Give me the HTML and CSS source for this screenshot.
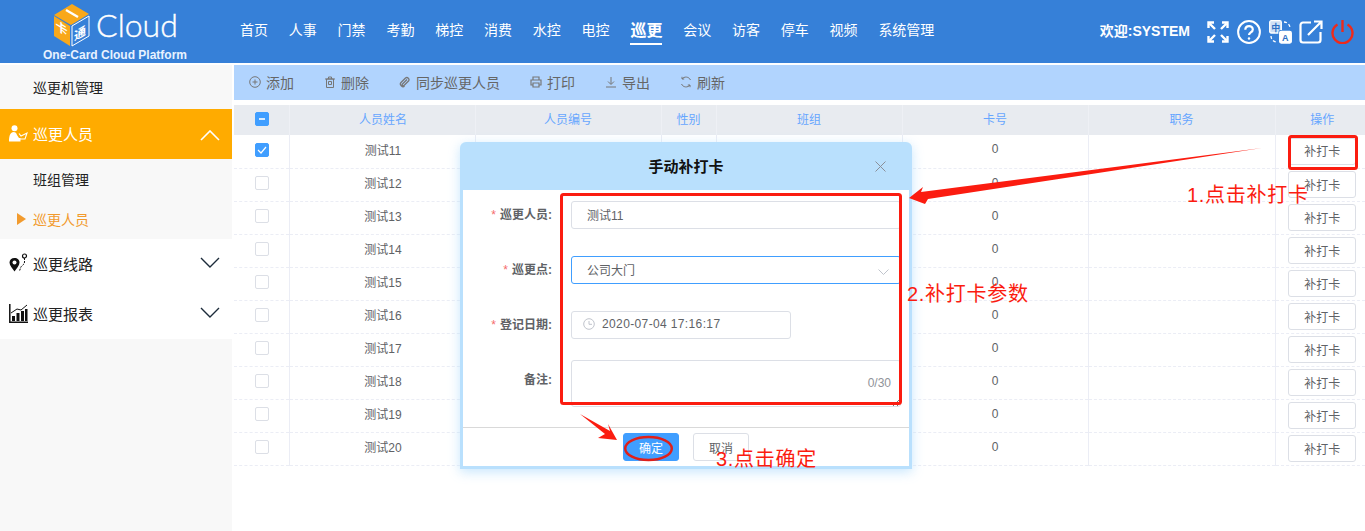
FILE: index.html
```html
<!DOCTYPE html>
<html lang="zh-CN">
<head>
    <meta charset="UTF-8">
    <title>One-Card Cloud Platform</title>
    <link rel="stylesheet" href="styles.css">
</head>
<body>
    <!-- Header -->
    <header class="topbar">
        <div class="brand">
            <div class="brand-row">
                <svg class="brand-cube" width="37" height="46" viewBox="0 0 37 46">
                    <polygon points="19,2 36,12 18,23 1,13" fill="#f9a81a"/>
                    <polygon points="1,14 17,24 17,44 1,34" fill="#f9a81a"/>
                    <polygon points="19,24 36,14 36,34 19,44" fill="none" stroke="#fff" stroke-width="1"/>
                    <path d="M13 8l12 7" stroke="#fff" stroke-width="2.400"/>
                    <text class="cube-text" transform="matrix(1 .6 0 1 2.500 27)">卡</text>
                    <text class="cube-text" transform="matrix(1 -.58 0 1 21 39)">通</text>
                </svg>
                <span class="brand-name">Cloud</span>
            </div>
            <div class="brand-sub">One-Card Cloud Platform</div>
        </div>
        <nav class="mainnav">
            <a>首页</a><a>人事</a><a>门禁</a><a>考勤</a><a>梯控</a><a>消费</a><a>水控</a><a>电控</a>
            <a class="active">巡更</a>
            <a>会议</a><a>访客</a><a>停车</a><a>视频</a><a>系统管理</a>
        </nav>
        <div class="welcome">欢迎:SYSTEM</div>
        <div class="tools">
            <svg width="22" height="22" viewBox="0 0 22 22" fill="none" stroke="#fff" stroke-width="2.400">
                <path d="M1.500 7V1.500H7M15 1.500h5.500V7M20.500 15v5.500H15M7 20.500H1.500V15"/>
                <path d="M2.500 2.500l5.500 5.500M19.500 2.500L14 8M19.500 19.500L14 14M2.500 19.500L8 14"/>
            </svg>
            <svg width="24" height="24" viewBox="0 0 24 24" fill="none" stroke="#fff" stroke-width="2">
                <circle cx="12" cy="12" r="10.900"/>
                <path d="M8.300 9.700c0-4.800 7.500-4.800 7.500-.3 0 3-3.800 3-3.800 5.600" stroke-width="2.200"/>
                <circle cx="12" cy="18.500" r="1.200" fill="#fff" stroke="none"/>
            </svg>
            <svg width="23" height="24" viewBox="0 0 23 24" fill="none" stroke="#fff" stroke-width="1.300">
                <rect x=".7" y=".7" width="11.600" height="12.300" rx="1.500" fill="#cfe0f5"/>
                <rect x="10" y="10.700" width="12.300" height="12.300" rx="1.500" fill="#fff" stroke="#3680d8"/>
                <rect x="10.700" y="11.400" width="11.600" height="11.600" rx="1.500" fill="#fff"/>
                <text x="2.200" y="10.500" class="tool-text">中</text>
                <text x="13" y="21" class="tool-text">A</text>
                <path d="M15 2a6 6 0 0 1 6 6M2 16a6 6 0 0 0 5 6" stroke-dasharray="3 2"/>
            </svg>
            <svg width="24" height="24" viewBox="0 0 24 24" fill="none" stroke="#fff" stroke-width="2.200">
                <path d="M12 2.500H4A2.500 2.500 0 0 0 1.500 5v15A2.500 2.500 0 0 0 4 22.500h15a2.500 2.500 0 0 0 2.500-2.500v-8"/>
                <path d="M9 15L22 2M15 1.500h7.500V9"/>
            </svg>
            <svg width="23" height="25" viewBox="0 0 23 25" fill="none" stroke="#ee2a1b" stroke-width="2.400">
                <path d="M6.500 5.500a10 10 0 1 0 10 0"/>
                <path d="M11.500 1v12"/>
            </svg>
        </div>
    </header>

    <div class="layout">
        <!-- Sidebar -->
        <aside class="sidebar">
            <div class="side-item">巡更机管理</div>
            <div class="side-group side-group-open">
                <svg class="side-icon" width="19" height="17" viewBox="0 0 19 17">
                    <circle cx="5.500" cy="3.200" r="3" fill="#fff"/>
                    <path d="M0 16.500c0-6 1.500-9.500 4.500-9.500 2 0 3 1 3.500 3l2 3h1.500v3.500z" fill="#fff"/>
                    <path d="M10 8.500l2 2.500 6-3-2 6h-5" fill="none" stroke="#fff" stroke-width="1.100"/>
                </svg>
                <span class="side-label">巡更人员</span>
                <svg class="side-arrow side-arrow-up" width="20" height="11" viewBox="0 0 20 11" fill="none" stroke="#fff" stroke-width="1.600"><path d="M1 10l9-9 9 9"/></svg>
            </div>
            <div class="side-sub">
                <div class="sub-item">班组管理</div>
                <div class="sub-item sub-item-active"><i class="sub-mark"></i>巡更人员</div>
            </div>
            <div class="side-group">
                <svg class="side-icon" width="19" height="20" viewBox="0 0 19 20">
                    <path d="M5.500 5C2.500 5 .5 7 .5 9.500c0 3 3 6 5 9 2-3 5-6 5-9C10.500 7 8.500 5 5.500 5z" fill="#111"/>
                    <circle cx="5.500" cy="9.500" r="2" fill="#fff"/>
                    <circle cx="15.500" cy="3" r="2" fill="none" stroke="#111" stroke-width="1.200"/>
                    <path d="M15.500 5v4c0 3-3 3-4 6l-1 3" fill="none" stroke="#111" stroke-dasharray="2 1"/>
                </svg>
                <span class="side-label">巡更线路</span>
                <svg class="side-arrow side-arrow-down" width="20" height="11" viewBox="0 0 20 11" fill="none" stroke="#1c2b3a" stroke-width="1.400"><path d="M1 1l9 9 9-9"/></svg>
            </div>
            <div class="side-group">
                <svg class="side-icon" width="19" height="19" viewBox="0 0 19 19">
                    <path d="M.8 0v18.200H19" fill="none" stroke="#111" stroke-width="1.500"/>
                    <path d="M3 17v-5h3v5zM7.500 17v-8h3v8zM12 17v-10h3v10zM16 17V5h2.500v12z" fill="#111"/>
                    <path d="M2 9l6-4 4 1 6-5" fill="none" stroke="#111"/>
                </svg>
                <span class="side-label">巡更报表</span>
                <svg class="side-arrow side-arrow-down" width="20" height="11" viewBox="0 0 20 11" fill="none" stroke="#1c2b3a" stroke-width="1.400"><path d="M1 1l9 9 9-9"/></svg>
            </div>
        </aside>

        <!-- Main Content -->
        <main class="content">
            <div class="toolbar">
                <span class="tool-btn">
                    <svg width="12" height="12" viewBox="0 0 12 12" fill="none" stroke="#777"><circle cx="6" cy="6" r="5.300"/><path d="M3.500 6h5M6 3.500v5"/></svg>添加
                </span>
                <span class="tool-btn">
                    <svg width="12" height="12" viewBox="0 0 12 12" fill="none" stroke="#777"><path d="M2.500 3h7v8.500h-7zM1 3h10M4.500 3V1h3v2M4.500 5.500h3v3h-3z"/></svg>删除
                </span>
                <span class="tool-btn">
                    <svg width="12" height="12" viewBox="0 0 12 12" fill="none" stroke="#777" stroke-width="1.300"><path d="M2 6.500L6.500 2c2-1.500 4.500 1 3 3L5 9.500c-1 1-2.500-.5-1.500-1.500L8 3.500M2 6.500c-2 2 1.500 5.500 3.500 3.500"/></svg>同步巡更人员
                </span>
                <span class="tool-btn">
                    <svg width="12" height="12" viewBox="0 0 12 12" fill="none" stroke="#777" stroke-width="1.200"><path d="M3 4V1h6v3M3 9H1V4h10v5H9M3 7h6v4H3z"/></svg>打印
                </span>
                <span class="tool-btn">
                    <svg width="12" height="12" viewBox="0 0 12 12" fill="none" stroke="#777"><path d="M6 1v7M3 5.500L6 8.500 9 5.500M1 11h10"/></svg>导出
                </span>
                <span class="tool-btn">
                    <svg width="12" height="12" viewBox="0 0 12 12" fill="none" stroke="#777"><path d="M10.500 4A5 5 0 0 0 2 3M1.500 8A5 5 0 0 0 10 9M2 .8V3h2.200M10 11.200V9H7.800"/></svg>刷新
                </span>
            </div>
            <table class="grid">
                <colgroup>
                    <col class="col-check"><col class="col-name"><col class="col-no"><col class="col-sex">
                    <col class="col-team"><col class="col-card"><col class="col-job"><col class="col-op">
                </colgroup>
                <thead>
                    <tr>
                        <th><span class="check check-on"><i class="check-dash"></i></span></th>
                        <th>人员姓名</th><th>人员编号</th><th>性别</th><th>班组</th><th>卡号</th><th>职务</th><th>操作</th>
                    </tr>
                </thead>
                <tbody>
                    <tr><td><span class="check check-on"><svg width="10" height="8" viewBox="0 0 10 8" fill="none" stroke="#fff" stroke-width="1.200"><path d="M1 4l3 3 5-6"/></svg></span></td><td>测试11</td><td></td><td></td><td></td><td>0</td><td></td><td><button class="mini-btn">补打卡</button></td></tr>
                    <tr><td><span class="check"></span></td><td>测试12</td><td></td><td></td><td></td><td>0</td><td></td><td><button class="mini-btn">补打卡</button></td></tr>
                    <tr><td><span class="check"></span></td><td>测试13</td><td></td><td></td><td></td><td>0</td><td></td><td><button class="mini-btn">补打卡</button></td></tr>
                    <tr><td><span class="check"></span></td><td>测试14</td><td></td><td></td><td></td><td>0</td><td></td><td><button class="mini-btn">补打卡</button></td></tr>
                    <tr><td><span class="check"></span></td><td>测试15</td><td></td><td></td><td></td><td>0</td><td></td><td><button class="mini-btn">补打卡</button></td></tr>
                    <tr><td><span class="check"></span></td><td>测试16</td><td></td><td></td><td></td><td>0</td><td></td><td><button class="mini-btn">补打卡</button></td></tr>
                    <tr><td><span class="check"></span></td><td>测试17</td><td></td><td></td><td></td><td>0</td><td></td><td><button class="mini-btn">补打卡</button></td></tr>
                    <tr><td><span class="check"></span></td><td>测试18</td><td></td><td></td><td></td><td>0</td><td></td><td><button class="mini-btn">补打卡</button></td></tr>
                    <tr><td><span class="check"></span></td><td>测试19</td><td></td><td></td><td></td><td>0</td><td></td><td><button class="mini-btn">补打卡</button></td></tr>
                    <tr><td><span class="check"></span></td><td>测试20</td><td></td><td></td><td></td><td>0</td><td></td><td><button class="mini-btn">补打卡</button></td></tr>
                </tbody>
            </table>
        </main>
    </div>

    <!-- Dialog -->
    <div class="dialog">
        <div class="dialog-head">
            <span class="dialog-title">手动补打卡</span>
            <svg class="dialog-close" width="11" height="11" viewBox="0 0 11 11" stroke="#8a8f99"><path d="M.5.500l10 10M10.500.500l-10 10"/></svg>
        </div>
        <div class="dialog-body">
            <div class="form-row">
                <label class="form-label"><em>*</em>巡更人员:</label>
                <div class="field field-wide">测试11</div>
            </div>
            <div class="form-row">
                <label class="form-label"><em>*</em>巡更点:</label>
                <div class="field field-wide field-focus">公司大门
                    <svg class="field-arrow" width="11" height="6" viewBox="0 0 11 6" fill="none" stroke="#c0c4cc"><path d="M.5.500l5 5 5-5"/></svg>
                </div>
            </div>
            <div class="form-row">
                <label class="form-label"><em>*</em>登记日期:</label>
                <div class="field field-date">
                    <svg width="12" height="12" viewBox="0 0 12 12" fill="none" stroke="#c0c4cc"><circle cx="6" cy="6" r="5.300"/><path d="M6 3v3.300h3"/></svg>
                    <span class="date-text">2020-07-04 17:16:17</span>
                </div>
            </div>
            <div class="form-row form-row-note">
                <label class="form-label form-label-note">备注:</label>
                <div class="field-area">
                    <span class="area-count">0/30</span>
                    <svg class="area-grip" width="7" height="7" viewBox="0 0 7 7" stroke="#777"><path d="M0 7l7-7M4 7l3-3"/></svg>
                </div>
            </div>
        </div>
        <div class="dialog-foot">
            <button class="dlg-btn dlg-btn-primary">确定</button>
            <button class="dlg-btn">取消</button>
        </div>
    </div>

    <!-- Tutorial marks drawn over the screenshot -->
    <svg class="marks" width="1365" height="531" viewBox="0 0 1365 531">
        <polygon points="909,198 923,187 921,192 1262,148 928,199 925,204" fill="#fb1c10"/>
        <polygon points="580,414 610,431 608,424 617,440 598,438 605,434" fill="#fb1c10"/>
        <rect x="1289.500" y="136.500" width="67" height="32" rx="2" fill="none" stroke="#fb1c10" stroke-width="3"/>
        <rect x="561.500" y="194.500" width="339" height="209" rx="2" fill="none" stroke="#fb1c10" stroke-width="3"/>
        <ellipse cx="648.500" cy="448.500" rx="23.300" ry="11.500" fill="none" stroke="#e0201a" stroke-width="2.500"/>
    </svg>
    <div class="note note-one">1.点击补打卡</div>
    <div class="note note-two">2.补打卡参数</div>
    <div class="note note-three">3.点击确定</div>
</body>
</html>
```

FILE: styles.css
```css
/* General */
* {
    box-sizing: border-box;
}

html, body {
    height: 100%;
}

body {
    margin: 0;
    display: flex;
    flex-direction: column;
    overflow: hidden;
    background-color: #fff;
    color: #606266;
    font-family: "Liberation Sans", "Noto Sans CJK SC", sans-serif;
    font-size: 12px;
}

/* Header */
.topbar {
    height: 63px;
    flex: none;
    display: flex;
    align-items: center;
    background-color: #3680d8;
    color: #fff;
}

.brand {
    width: 240px;
    flex: none;
    padding-left: 43px;
}

.brand-row {
    height: 46px;
    margin-top: 1px;
    display: flex;
    align-items: center;
    padding-left: 10px;
}

.brand-cube {
    flex: none;
}

.cube-text {
    font-size: 12px;
    font-weight: 700;
    fill: #fff;
}

.brand-name {
    margin-left: 6px;
    font-family: Lato, sans-serif;
    font-size: 32px;
    font-weight: 300;
    line-height: 40px;
    -webkit-text-stroke: 0.4px #fff;
}

.brand-sub {
    width: 144px;
    font-size: 12px;
    font-weight: 700;
    line-height: 14px;
    color: #e8f2ff;
    white-space: nowrap;
}

.mainnav {
    display: flex;
    align-items: center;
    gap: 20.8px;
    font-size: 14px;
    margin-top: -6px;
}

.mainnav .active {
    font-size: 16px;
    font-weight: 700;
    margin-top: 4px;
    padding-bottom: 2px;
    border-bottom: 2px solid #fff;
}

.welcome {
    margin-left: auto;
    margin-top: -3px;
    font-size: 14px;
    font-weight: 700;
}

.tools {
    display: flex;
    align-items: center;
    gap: 7.75px;
    margin-left: 17px;
    margin-right: 11px;
}

.tool-text {
    stroke: none;
    fill: #2b6fc4;
    font-size: 9px;
    font-weight: 700;
}

/* Layout */
.layout {
    flex: 1;
    min-height: 0;
    display: flex;
    margin-top: 2px;
}

/* Sidebar */
.sidebar {
    width: 232px;
    flex: none;
    background-color: #f8f8f8;
}

.side-item {
    height: 44px;
    line-height: 46px;
    padding-left: 33px;
    font-size: 14px;
    color: #222;
}

.side-group {
    height: 50px;
    display: flex;
    align-items: center;
    padding: 0 12px 2px 9px;
    background-color: #fff;
    color: #222;
    font-size: 15px;
}

.side-group-open {
    background-color: #ffab00;
    color: #fff;
}

.side-icon {
    width: 19px;
    flex: none;
    margin-right: 5px;
}

.side-arrow {
    margin-left: auto;
}

.side-arrow-up {
    margin-top: 4px;
}

.side-arrow-down {
    margin-bottom: 2px;
}

.sub-item {
    height: 40px;
    display: flex;
    align-items: center;
    padding-left: 33px;
    font-size: 14px;
    color: #222;
    position: relative;
}

.sub-item-active {
    color: #f29b2e;
}

.sub-mark {
    position: absolute;
    left: 17px;
    top: 14px;
    border-left: 9px solid #f29b2e;
    border-top: 6px solid transparent;
    border-bottom: 6px solid transparent;
}

/* Toolbar */
.content {
    flex: 1;
    margin-left: 2px;
    min-width: 0;
}

.toolbar {
    height: 35px;
    display: flex;
    align-items: center;
    gap: 30px;
    padding: 0 0 2px 15px;
    background-color: #b1d4fe;
    color: #666;
    font-size: 14px;
}

.tool-btn {
    display: flex;
    align-items: center;
    gap: 5px;
}

/* Table */
.grid {
    width: 1131px;
    margin-top: 5px;
    border-collapse: collapse;
    table-layout: fixed;
    text-align: center;
}

.col-check { width: 55px; }
.col-name { width: 186px; }
.col-no { width: 186px; }
.col-sex { width: 55px; }
.col-team { width: 186px; }
.col-card { width: 186px; }
.col-job { width: 187px; }
.col-op { width: 90px; }

.grid th {
    height: 30px;
    padding: 0 0 3px;
    background-color: #e8ebf0;
    border-right: 1px solid #eef0f5;
    color: #66a6ff;
    font-weight: 400;
}

.grid td {
    height: 33px;
    padding: 0 0 4px;
    border-right: 1px solid #ebedf5;
    border-bottom: 1px dashed #ebedf5;
}

.grid th:first-child,
.grid td:first-child,
.grid th:nth-child(2),
.grid td:nth-child(2) {
    padding-left: 2px;
}

.grid th:last-child,
.grid td:last-child {
    border-right: none;
    padding-left: 4px;
}

.grid td:last-child {
    padding-bottom: 0;
}

.check {
    width: 14px;
    height: 14px;
    display: inline-flex;
    align-items: center;
    justify-content: center;
    vertical-align: middle;
    background-color: #fff;
    border: 1px solid #dcdfe6;
    border-radius: 2px;
}

.check-on {
    background-color: #409eff;
    border-color: #409eff;
}

.check-dash {
    width: 6px;
    height: 2px;
    background-color: #d9ecff;
}

.mini-btn {
    width: 68px;
    height: 27px;
    padding: 0 0 1px;
    background-color: #fff;
    border: 1px solid #dcdfe6;
    border-radius: 3px;
    color: #606266;
    font: inherit;
}

/* Dialog */
.dialog {
    position: absolute;
    left: 460px;
    top: 142px;
    width: 452px;
    height: 327px;
    display: flex;
    flex-direction: column;
    padding: 0 3px 3px;
    background-color: #b9e0fd;
    border-radius: 6px 6px 0 0;
    box-shadow: 0 3px 12px rgba(185, 224, 253, 0.8);
}

.dialog-head {
    height: 48px;
    flex: none;
    display: flex;
    align-items: center;
    justify-content: center;
    padding-bottom: 2px;
    position: relative;
}

.dialog-title {
    font-size: 15px;
    font-weight: 700;
    color: #111;
}

.dialog-close {
    position: absolute;
    right: 23px;
    top: 19px;
}

.dialog-body {
    flex: 1;
    padding-top: 11px;
    background-color: #fff;
}

.form-row {
    height: 55px;
    display: flex;
    align-items: flex-start;
}

.form-row-note {
    height: 67px;
    margin-top: -6px;
}

.form-label {
    width: 89px;
    flex: none;
    line-height: 28px;
    text-align: right;
    font-weight: 700;
}

.form-label-note {
    line-height: 40px;
}

.form-label em {
    margin-right: 4px;
    color: #f56c6c;
    font-style: normal;
    font-weight: 400;
}

.field {
    height: 28px;
    display: flex;
    align-items: center;
    margin-left: 19px;
    padding: 0 0 2px 15px;
    background-color: #fff;
    border: 1px solid #dcdfe6;
    border-radius: 3px;
    position: relative;
}

.field-wide {
    width: 330px;
}

.field-focus {
    border-color: #409eff;
}

.field-arrow {
    position: absolute;
    right: 11px;
    top: 12px;
}

.field-date {
    width: 220px;
    padding-left: 11px;
    gap: 7px;
}

.date-text {
    letter-spacing: 0.37px;
}

.field-area {
    width: 330px;
    height: 47px;
    margin-left: 19px;
    border: 1px solid #dcdfe6;
    border-radius: 3px;
    position: relative;
}

.area-count {
    position: absolute;
    right: 9px;
    bottom: 16px;
    color: #909399;
}

.area-grip {
    position: absolute;
    right: 0;
    bottom: 0;
}

.dialog-foot {
    height: 39px;
    flex: none;
    display: flex;
    gap: 14px;
    padding: 5px 0 0 160px;
    background-color: #fff;
    border-top: 1px solid #d9d9d9;
}

.dlg-btn {
    width: 56px;
    height: 28px;
    padding: 0;
    background-color: #fff;
    border: 1px solid #dcdfe6;
    border-radius: 3px;
    color: #606266;
    font: inherit;
}

.dlg-btn-primary {
    background-color: #409eff;
    border-color: #409eff;
    color: #fff;
}

/* Tutorial marks */
.marks {
    position: absolute;
    left: 0;
    top: 0;
}

.note {
    position: absolute;
    color: #fb1c10;
    font-size: 20px;
    line-height: 26px;
    letter-spacing: 0.7px;
    white-space: nowrap;
}

.note-one {
    left: 1187px;
    top: 182px;
}

.note-two {
    left: 907px;
    top: 281px;
}

.note-three {
    left: 716px;
    top: 446px;
}
```
